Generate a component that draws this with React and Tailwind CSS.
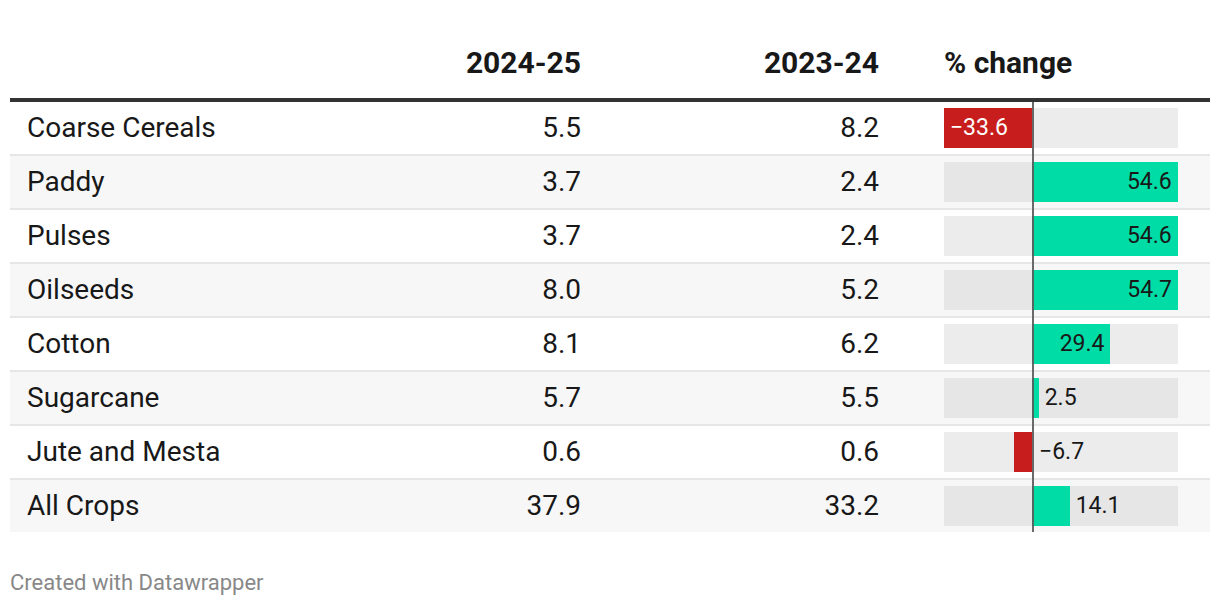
import React from "react";

const rows = [
  { name: "Coarse Cereals", a: "5.5", b: "8.2", v: -33.6, label: "−33.6", pos: "inneg" },
  { name: "Paddy", a: "3.7", b: "2.4", v: 54.6, label: "54.6", pos: "in" },
  { name: "Pulses", a: "3.7", b: "2.4", v: 54.6, label: "54.6", pos: "in" },
  { name: "Oilseeds", a: "8.0", b: "5.2", v: 54.7, label: "54.7", pos: "in" },
  { name: "Cotton", a: "8.1", b: "6.2", v: 29.4, label: "29.4", pos: "in" },
  { name: "Sugarcane", a: "5.7", b: "5.5", v: 2.5, label: "2.5", pos: "out" },
  { name: "Jute and Mesta", a: "0.6", b: "0.6", v: -6.7, label: "−6.7", pos: "outneg" },
  { name: "All Crops", a: "37.9", b: "33.2", v: 14.1, label: "14.1", pos: "out" },
];

const ZERO = 88;
const NEG = 2.62;
const POSS = 2.67;

function Bar({ r, alt }) {
  const neg = r.v < 0;
  const w = neg ? -r.v * NEG : r.v * POSS;
  const left = neg ? ZERO - w : ZERO;
  return (
    <div className={`relative w-[234px] h-[40px] ${alt ? "bg-[#e6e6e6]" : "bg-[#ececec]"}`}>
      <div
        className={`absolute top-0 h-[40px] ${neg ? "bg-[#c71e1d]" : "bg-[#00dca6]"}`}
        style={{ left: `${left}px`, width: `${w}px` }}
      />
      {r.pos === "in" && (
        <div
          className="absolute top-0 h-[40px] leading-[40px] text-[23px] text-[#181818] text-right pr-[6px]"
          style={{ left: `${left}px`, width: `${w}px` }}
        >
          {r.label}
        </div>
      )}
      {r.pos === "inneg" && (
        <div
          className="absolute top-0 h-[40px] leading-[40px] text-[23px] text-white text-left pl-[6px]"
          style={{ left: `${left}px`, width: `${w}px` }}
        >
          {r.label}
        </div>
      )}
      {r.pos === "out" && (
        <div
          className="absolute top-0 h-[40px] leading-[40px] text-[23px] text-[#181818] whitespace-nowrap"
          style={{ left: `${left + w + 6}px` }}
        >
          {r.label}
        </div>
      )}
      {r.pos === "outneg" && (
        <div
          className="absolute top-0 h-[40px] leading-[40px] text-[23px] text-[#181818] whitespace-nowrap"
          style={{ left: `${ZERO + 7}px` }}
        >
          {r.label}
        </div>
      )}
    </div>
  );
}

export default function App() {
  return (
    <div className="w-[1220px] h-[608px] bg-white px-[10px] font-['Roboto',sans-serif] text-[#181818]">
      <div className="flex items-end h-[102px] pb-[20px] text-[30px] leading-[30px] font-bold border-b-[4px] border-[#333333]">
        <div className="flex-1" />
        <div className="w-[187px] text-right pr-[16px]">2024-25</div>
        <div className="w-[298px] text-right pr-[16px]">2023-24</div>
        <div className="w-[315px] pl-[49px] pr-[32px]">% change</div>
      </div>
      <div>
        {rows.map((r, i) => {
          const alt = i % 2 === 1;
          const last = i === rows.length - 1;
          return (
            <div
              key={r.name}
              className={`flex items-center text-[28px] leading-[52px] ${alt ? "bg-[#f7f7f7]" : "bg-white"} ${last ? "h-[52px]" : "h-[54px] border-b-[2px] border-[#e6e6e6]"}`}
            >
              <div className="flex-1 pl-[17px] whitespace-nowrap">{r.name}</div>
              <div className="w-[187px] text-right pr-[16px]">{r.a}</div>
              <div className="w-[298px] text-right pr-[16px]">{r.b}</div>
              <div className="w-[315px] pl-[49px] pr-[32px] relative h-full flex items-center">
                <Bar r={r} alt={alt} />
                <div
                  className={`absolute left-[137px] top-0 w-[2px] bg-[#5a5a5a]/90 ${last ? "bottom-0" : "-bottom-[2px]"}`}
                />
              </div>
            </div>
          );
        })}
      </div>
      <div className="mt-[40px] text-[22px] leading-[22px] text-[#888888]">Created with Datawrapper</div>
    </div>
  );
}
